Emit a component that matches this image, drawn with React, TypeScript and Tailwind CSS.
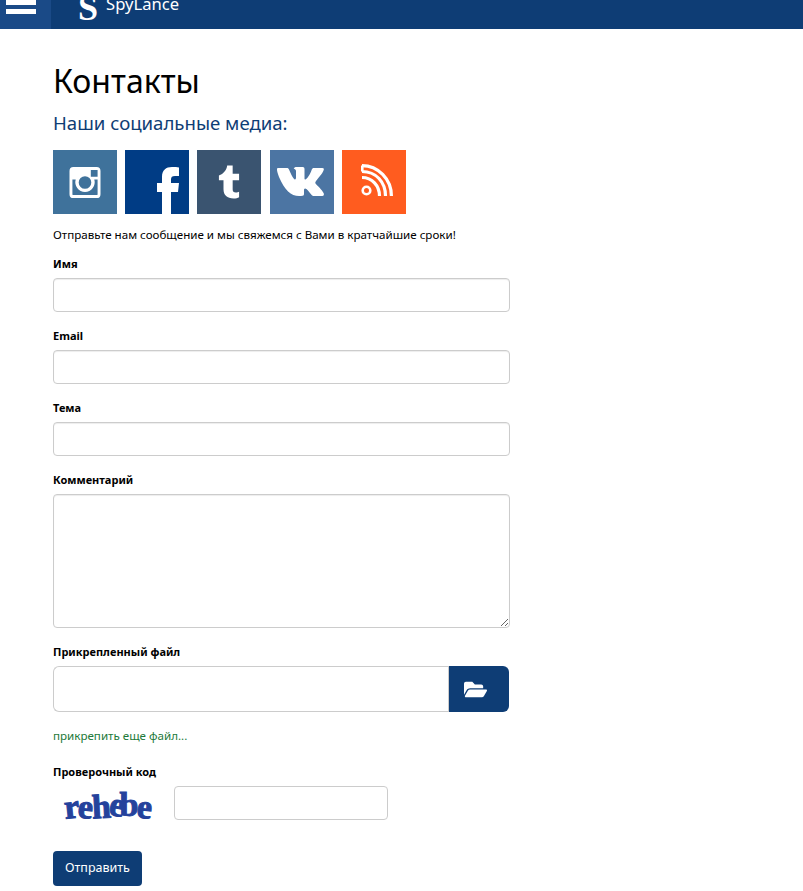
import { FaFolderOpen } from 'react-icons/fa'

const font = { fontFamily: '"Noto Sans", "Liberation Sans", sans-serif' }

function InstagramIcon() {
  return (
    <svg width="32" height="31" viewBox="0 0 32 32" className="block">
      <path
        fillRule="evenodd"
        fill="#fff"
        d="M4 0h24a4 4 0 0 1 4 4v24a4 4 0 0 1-4 4H4a4 4 0 0 1-4-4V4a4 4 0 0 1 4-4Zm18 3v7h7V3h-7ZM3 13v15a1 1 0 0 0 1 1h24a1 1 0 0 0 1-1V13h-3.400a10 10 0 1 1-19.200 0H3Zm13-3.500a6.500 6.500 0 1 0 0 13 6.500 6.500 0 0 0 0-13Z"
      />
    </svg>
  )
}

function FacebookIcon() {
  return (
    <svg width="64" height="64" viewBox="0 0 64 64" className="block">
      <path
        fill="#fff"
        d="M37 64V42h-5v-9h5v-6c0-7 4-10 10-10 3 0 5 .2 7 .4V26h-4c-3 0-4 1-4 3.500V33h8l-1 9h-7v22H37Z"
      />
    </svg>
  )
}

function TumblrIcon() {
  return (
    <svg width="22" height="34" viewBox="0 0 24 36" className="block">
      <path
        fill="#fff"
        d="M10 0h6v9h7v7h-7v10c0 2.500 1 3.500 3.500 3.500 1.300 0 2.700-.3 3.500-.8v5.800c-1.500 1-3.500 1.500-6 1.500-7 0-11-3.500-11-10v-10H1v-5C6 9 9.500 5 10 0Z"
      />
    </svg>
  )
}

function VkIcon() {
  return (
    <svg width="50" height="30" viewBox="0 0 50 30" className="block">
      <path
        fill="#fff"
        d="M1 1h9c1 0 1.500.5 2 1.500 2 5 4.500 9.500 6 10 .8 0 1-.8 1-3V4c-.2-1.500-1-2-2.300-2.500.3-.8 1.300-1.500 3-1.500h6c1.300 0 1.800.7 1.800 2.200v9c0 1 .4 1.400.8 1.400 1.500 0 5.400-6 6.500-10 .3-1 1-1.600 2-1.600h8.500c1.500 0 1.800.8 1.400 2-1.300 4-6.500 9-8 11.500-.6 1-.5 1.500 0 2.300 1.300 1.800 6.500 6 8 9.500.6 1.600 0 2.700-1.500 2.700h-8c-1.300 0-2-.5-3-1.600-2-2.200-4.500-5.900-6-5.900-1 0-1.200.7-1.200 2.300v3c0 1.400-.5 2.200-3 2.200C15 30 8 24 2 10 .5 6 0 4 0 2.500 0 1.500.3 1 1 1Z"
      />
    </svg>
  )
}

function RssIcon() {
  return (
    <svg width="32" height="32" viewBox="0 0 32 32" className="block" fill="none">
      <path stroke="#fff" strokeWidth="3.200" d="M1 1.600C17 1.600 30.400 15 30.400 32" />
      <path stroke="#fff" strokeWidth="3.200" d="M1 7.500C15 7.500 24.500 18 24.500 32M1 1.600v6" />
      <path stroke="#fff" strokeWidth="3.200" d="M1 13.500C11 13.500 18.500 21.500 18.500 32" />
      <circle cx="5.500" cy="26.500" r="3.800" stroke="#fff" strokeWidth="2.600" />
    </svg>
  )
}

const labelCls = 'mb-[10px] block h-[9px] text-[11px] leading-[9px] font-bold text-black'

function Field({ label, children }: { label: string; children: React.ReactNode }) {
  return (
    <div className="mb-[19px]">
      <label className={labelCls}>{label}</label>
      {children}
    </div>
  )
}

const inputCls =
  'block h-[34px] w-[457px] rounded-[4px] border border-[#ccc] bg-white shadow-[inset_0_1px_1px_rgba(0,0,0,0.075)]'

export default function App() {
  return (
    <div className="min-h-[891px] overflow-hidden bg-white" style={font}>
      <header className="flex h-[29px] items-start bg-[#0e3d75]">
        <div className="flex h-[29px] w-[51px] flex-col gap-[4px] bg-[#1a4a87] pl-[6px]">
          <span className="h-[5px] w-[30px] bg-white" />
          <span className="h-[5px] w-[30px] bg-white" />
        </div>
        <div className="ml-[27px] flex h-[29px] items-start overflow-hidden">
          <span
            className="mt-[-6px] text-[36px] leading-[28px] font-bold text-white"
            style={{ fontFamily: '"Liberation Serif", serif' }}
          >
            S
          </span>
          <span className="mt-[-6px] ml-[8px] text-[16.600px] leading-[20px] text-white">SpyLance</span>
        </div>
      </header>

      <main className="pt-[30px] pl-[53px]">
        <h1 className="h-[44px] text-[32px] leading-[44px] font-normal text-black">Контакты</h1>
        <h2 className="mt-[6px] h-[28px] text-[18.6px] leading-[28px] font-normal text-[#0e3d75]">
          Наши социальные медиа:
        </h2>

        <div className="mt-[13px] flex gap-2">
          <div className="flex size-16 items-center justify-center bg-[#3f729b]">
            <InstagramIcon />
          </div>
          <div className="size-16 overflow-hidden bg-[#003c85]">
            <FacebookIcon />
          </div>
          <div className="flex size-16 items-center justify-center bg-[#3a5470]">
            <TumblrIcon />
          </div>
          <div className="ml-px flex size-16 items-center justify-center bg-[#4c75a3]">
            <VkIcon />
          </div>
          <div className="flex size-16 items-center justify-center bg-[#ff5c1f] pb-[5px] pl-[5px]">
            <RssIcon />
          </div>
        </div>

        <p className="mt-[13px] h-[16px] text-[11.6px] leading-[16px] text-black">
          Отправьте нам сообщение и мы свяжемся с Вами в кратчайшие сроки!
        </p>

        <form className="mt-[16px]">
          <Field label="Имя">
            <input type="text" className={inputCls} />
          </Field>
          <Field label="Email">
            <input type="text" className={inputCls} />
          </Field>
          <Field label="Тема">
            <input type="text" className={inputCls} />
          </Field>
          <Field label="Комментарий">
            <textarea className="block h-[134px] w-[457px] rounded-[4px] border border-[#ccc] bg-white shadow-[inset_0_1px_1px_rgba(0,0,0,0.075)]" />
          </Field>

          <div className="mb-[16px]">
            <label className={labelCls}>Прикрепленный файл</label>
            <div className="flex h-[46px] w-[456px]">
              <div className="flex-1 rounded-l-[6px] border border-r-0 border-[#ccc] bg-white" />
              <button
                type="button"
                className="flex w-[61px] items-center justify-center rounded-r-[6px] border-l border-[#ccc] bg-[#0e3d75] pr-[7px] text-white"
              >
                <FaFolderOpen className="size-[23px]" />
              </button>
            </div>
          </div>

          <a className="block h-[16px] text-[11.6px] leading-[16px] text-[#1d7a3a]">прикрепить еще файл...</a>

          <div className="mt-[23px]">
            <label className={labelCls}>Проверочный код</label>
            <div className="flex h-[34px] items-center">
              <div
                className="flex w-[121px] translate-y-[4px] justify-start pl-[11px] text-[34px] leading-[34px] font-bold tracking-[-1.200px] text-[#24429c] [-webkit-text-stroke:1px_#24429c]"
                style={{ fontFamily: '"Liberation Serif", serif' }}
              >
                <span className="-rotate-6">r</span>
                <span className="rotate-6">e</span>
                <span className="-rotate-3">h</span>
                <span className="-translate-y-[2px] rotate-12">e</span>
                <span className="-ml-[4px] -translate-y-[2px]">b</span>
                <span className="rotate-6">e</span>
              </div>
              <input type="text" className="h-[34px] w-[214px] rounded-[4px] border border-[#ccc] bg-white" />
            </div>
          </div>

          <button
            type="button"
            className="mt-[31px] block h-[35px] w-[89px] rounded-[4px] bg-[#0e3d75] text-[12.5px] text-white"
          >
            Отправить
          </button>
        </form>
      </main>
    </div>
  )
}
